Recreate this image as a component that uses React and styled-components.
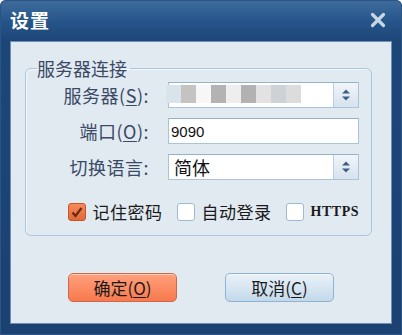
import styled, { createGlobalStyle } from 'styled-components'

const Global = createGlobalStyle`
  html, body { margin: 0; padding: 0; background: #ffffff; }
  body { font-family: "Noto Sans CJK SC", "Noto Sans", sans-serif; }
`

const blurCells = [
  '#d9e3ea', '#c3c3c3', '#f7f7f7', '#b3b3b3', '#eeeeee',
  '#b2b2b2', '#e2e2e2', '#cdd2d6', '#dcdcdc', '#ffffff',
]

function Spinner() {
  return (
    <Spin>
      <svg width="10" height="14" viewBox="0 0 10 14">
        <path d="M1 5.5 L5 1.5 L9 5.5 Z" fill="#3d5f86" />
        <path d="M1 8.5 L5 12.5 L9 8.5 Z" fill="#3d5f86" />
      </svg>
    </Spin>
  )
}

function Check({ checked }) {
  return (
    <Box checked={checked}>
      {checked && (
        <svg width="14" height="14" viewBox="0 0 14 14">
          <path d="M2.5 7.5 L5.5 11 L11.5 3" stroke="#6a2a10" strokeWidth="2.2" fill="none" />
        </svg>
      )}
    </Box>
  )
}

export default function App() {
  return (
    <>
      <Global />
      <Window>
        <TitleBar>
          <Title>设置</Title>
          <Close>
            <svg width="16" height="16" viewBox="0 0 16 16">
              <path d="M2.5 2.5 L13.5 13.5 M13.5 2.5 L2.5 13.5" stroke="#c8d6e6" strokeWidth="3.2" strokeLinecap="round" />
            </svg>
          </Close>
        </TitleBar>
        <Body>
          <Group>
            <Legend>服务器连接</Legend>
            <Form>
              <Label>服务器(<u>S</u>):</Label>
              <Field>
                <Blur>
                  {blurCells.map((c, i) => <Cell key={i} style={{ background: c }} />)}
                </Blur>
                <Spinner />
              </Field>
              <Label>端口(<u>O</u>):</Label>
              <Field>
                <Value mono>9090</Value>
              </Field>
              <Label>切换语言:</Label>
              <Field>
                <Value>简体</Value>
                <Spinner />
              </Field>
            </Form>
            <Checks>
              <CheckItem><Check checked />记住密码</CheckItem>
              <CheckItem><Check />自动登录</CheckItem>
              <CheckItem latin><Check />HTTPS</CheckItem>
            </Checks>
          </Group>
          <Buttons>
            <Button primary>确定(<u>O</u>)</Button>
            <Button>取消(<u>C</u>)</Button>
          </Buttons>
        </Body>
      </Window>
    </>
  )
}

const Window = styled.div`
  width: 402px;
  height: 335px;
  box-sizing: border-box;
  display: flex;
  flex-direction: column;
  padding: 0 10px 11px 10px;
  border-radius: 6px 6px 0 0;
  background: linear-gradient(to bottom, #3e6d9c 0px, #26548a 22px, #1d4678 41px, #1c4173 100%);
  box-shadow: inset 0 0 0 1px #2c5484;
`

const TitleBar = styled.div`
  height: 41px;
  display: flex;
  align-items: center;
  justify-content: space-between;
`

const Title = styled.div`
  color: #ffffff;
  font-size: 19px;
  font-weight: bold;
  letter-spacing: 1px;
  margin-top: -2px;
`

const Close = styled.div`
  width: 16px;
  height: 16px;
  margin-right: 6px;
  margin-top: -2px;
  display: flex;
`

const Body = styled.div`
  flex: 1;
  background: #e1e9f1;
  border: 1px solid #6f8fb5;
  display: flex;
  flex-direction: column;
  padding: 15px 19px 0 14px;
`

const Group = styled.fieldset`
  margin: 0;
  padding: 3px 12px 11px 0;
  border: 1px solid #aac6de;
  border-radius: 6px;
  box-shadow: inset 1px 1px 0 #f3f7fb;
`

const Legend = styled.legend`
  margin-left: 11px;
  padding: 0 3px 0 0;
  font-size: 18px;
  color: #3a4a66;
  line-height: 22px;
`

const Form = styled.div`
  display: grid;
  grid-template-columns: 123px 1fr;
  column-gap: 19px;
  row-gap: 10px;
  align-items: center;
`

const Label = styled.div`
  text-align: right;
  font-size: 18px;
  letter-spacing: 0.5px;
  color: #3a4a66;
  u { text-decoration-thickness: 1px; text-underline-offset: 2px; }
`

const Field = styled.div`
  height: 26px;
  box-sizing: border-box;
  border: 1px solid #a9c3d9;
  border-top-color: #94b2cc;
  background: #ffffff;
  display: flex;
  align-items: stretch;
`

const Value = styled.div`
  flex: 1;
  display: flex;
  align-items: center;
  padding-left: ${p => (p.mono ? '2px' : '5px')};
  font-size: ${p => (p.mono ? '15px' : '18px')};
  font-family: ${p => (p.mono ? '"Liberation Sans", sans-serif' : '"Noto Sans CJK SC", sans-serif')};
  color: #111111;
`

const Blur = styled.div`
  flex: 1;
  display: flex;
  padding: 4px 0 1px 0;
  margin-left: -3px;
  margin-top: -2px;
`

const Cell = styled.div`
  width: 15px;
  height: 18px;
`

const Spin = styled.div`
  width: 24px;
  border-left: 1px solid #b9cfe2;
  background: linear-gradient(to bottom, #f1f5f9, #d6e2ed);
  display: flex;
  align-items: center;
  justify-content: center;
`

const Checks = styled.div`
  display: flex;
  justify-content: flex-end;
  align-items: center;
  gap: 14px;
  margin-top: 19px;
`

const CheckItem = styled.label`
  display: flex;
  align-items: center;
  gap: 7px;
  font-size: ${p => (p.latin ? '14px' : '17px')};
  letter-spacing: 0.5px;
  font-family: ${p => (p.latin ? '"Liberation Serif", "DejaVu Serif", serif' : '"Noto Sans CJK SC", sans-serif')};
  font-weight: ${p => (p.latin ? 'bold' : 'normal')};
  color: #1a1a1a;
`

const Box = styled.span`
  width: 18px;
  height: 18px;
  box-sizing: border-box;
  border-radius: 3px;
  display: flex;
  align-items: center;
  justify-content: center;
  border: 1px solid ${p => (p.checked ? '#c5562a' : '#9cbad4')};
  background: ${p => (p.checked ? 'linear-gradient(to bottom, #f58a5a, #e2683a)' : '#ffffff')};
`

const Buttons = styled.div`
  display: flex;
  justify-content: center;
  gap: 48px;
  margin-top: 37px;
  padding-left: 5px;
`

const Button = styled.button`
  width: 109px;
  height: 29px;
  border-radius: 5px;
  font-family: "Noto Sans CJK SC", sans-serif;
  font-size: 17px;
  color: #1a1a1a;
  padding: 0;
  border: 1px solid ${p => (p.primary ? '#c96a4a' : '#8fb3d3')};
  background: ${p => (p.primary
    ? 'linear-gradient(to bottom, #ffa07c, #f8794d)'
    : 'linear-gradient(to bottom, #eaf2f9, #c3d9ea)')};
  box-shadow: inset 0 1px 0 rgba(255,255,255,0.5);
  u { text-decoration-thickness: 1px; text-underline-offset: 2px; }
`
